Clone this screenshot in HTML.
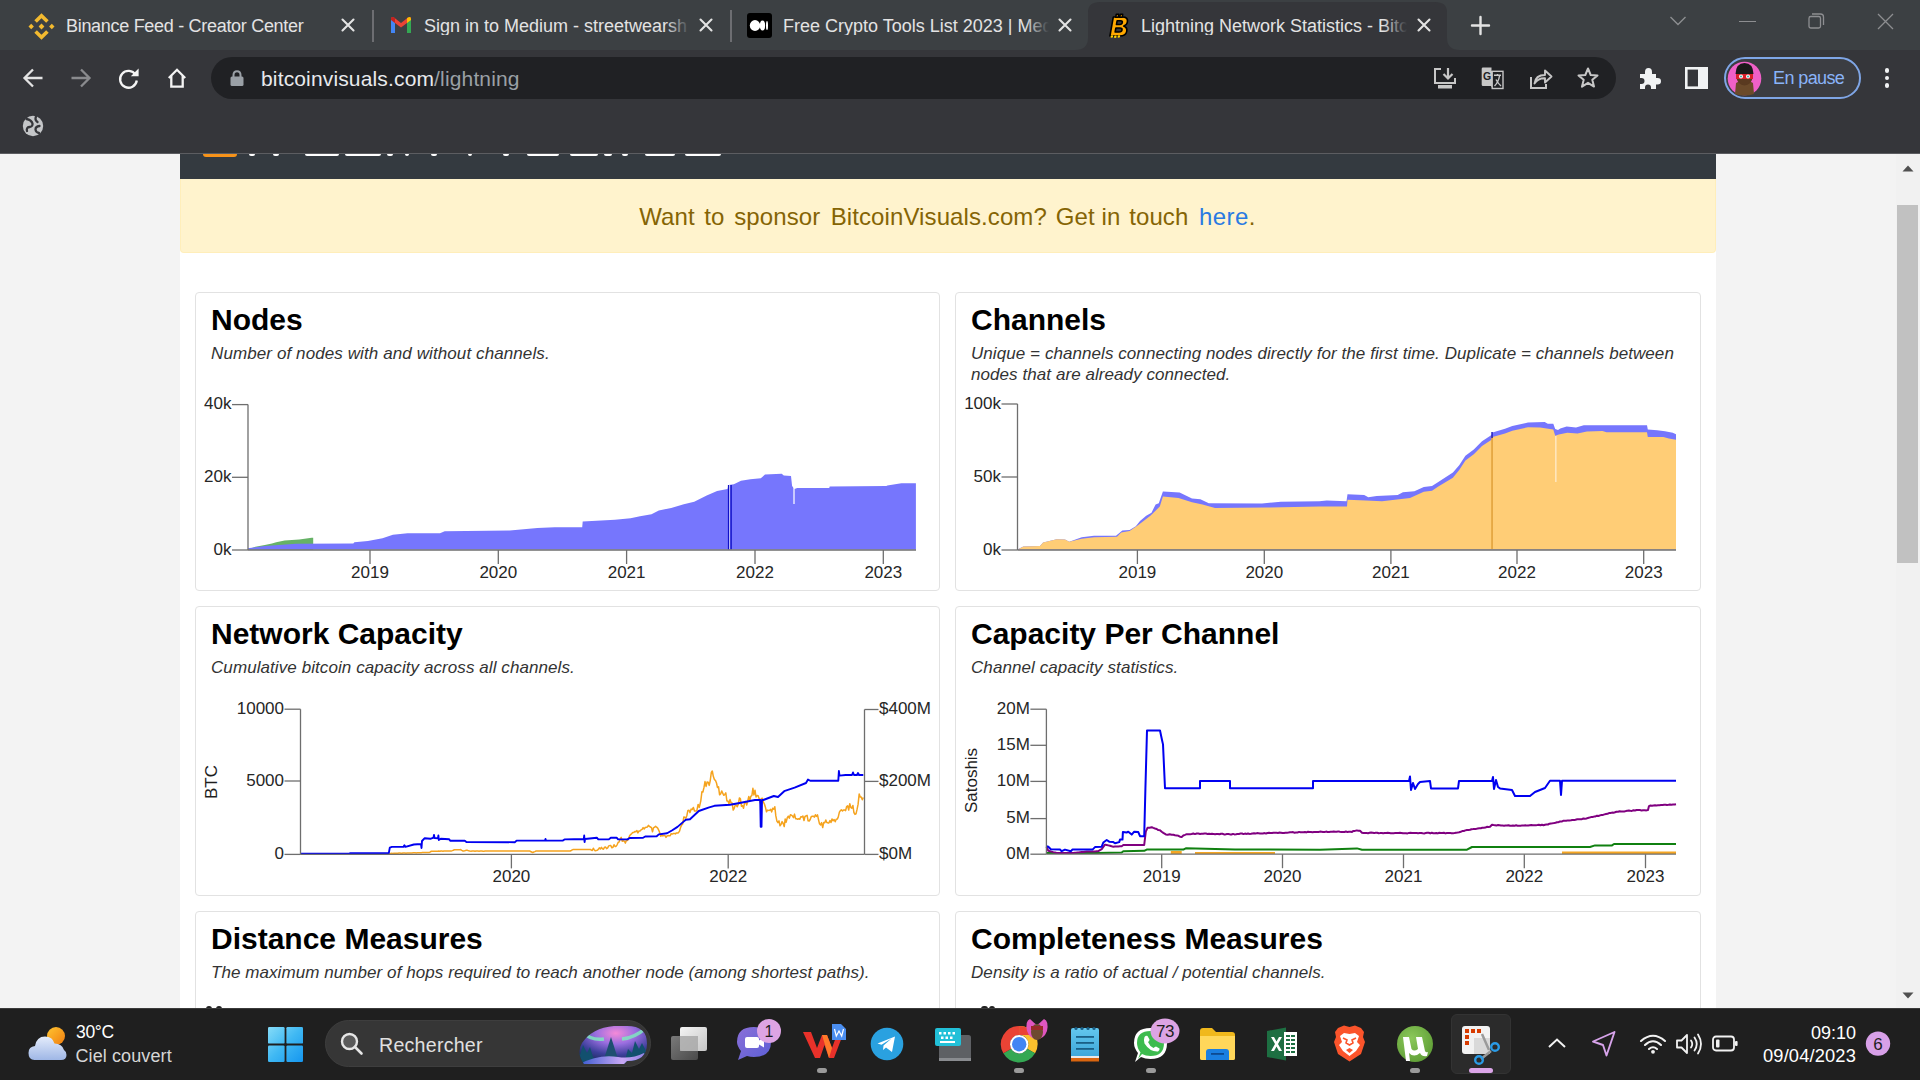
<!DOCTYPE html><html><head><meta charset="utf-8"><title>Lightning Network Statistics</title><style>
*{margin:0;padding:0;box-sizing:border-box}
html,body{width:1920px;height:1080px;overflow:hidden;background:#f3f3f3;font-family:"Liberation Sans", sans-serif}
.a{position:absolute}
.t{position:absolute;white-space:nowrap;line-height:1}
svg{position:absolute;overflow:visible}
</style></head><body>
<div class="a" style="left:0;top:0;width:1920px;height:50px;background:#3c4043"></div>
<svg class="a" style="left:1075px;top:0px;" width="385" height="50" viewBox="0 0 385 50"><path d="M0,50 Q13,50 13,38 L13,12 Q13,2 25,2 L360,2 Q372,2 372,12 L372,38 Q372,50 385,50 Z" fill="#35363a"/></svg>
<div class="a" style="left:0;top:50px;width:1920px;height:103px;background:#35363a"></div>
<div class="a" style="left:0;top:153px;width:1920px;height:1px;background:#5c5d61"></div>
<div class="a" style="left:372px;top:10px;width:1.5px;height:32px;background:#6d6e72"></div>
<div class="a" style="left:730px;top:10px;width:1.5px;height:32px;background:#6d6e72"></div>
<svg class="a" style="left:28px;top:13px;" width="27" height="27" viewBox="0 0 27 27"><g fill="none" stroke="#f3ba2f" stroke-width="3.6" stroke-linejoin="miter"><path d="M7.6,8.6 L13.5,2.7 L19.4,8.6"/><path d="M7.6,18.4 L13.5,24.3 L19.4,18.4"/></g><g fill="#f3ba2f"><path d="M13.5,10.6 L16.4,13.5 L13.5,16.4 L10.6,13.5 Z"/><path d="M3.2,10.8 L5.9,13.5 L3.2,16.2 L0.5,13.5 Z"/><path d="M23.8,10.8 L26.5,13.5 L23.8,16.2 L21.1,13.5 Z"/></g></svg>
<div class="t" style="left:66px;top:16.76px;font-size:18px;color:#e3e3e3;font-weight:400;font-style:normal;letter-spacing:-0.3px">Binance Feed - Creator Center</div>
<svg class="a" style="left:341px;top:18px;" width="14" height="14" viewBox="0 0 14 14"><path d="M1.5,1.5 L12.5,12.5 M12.5,1.5 L1.5,12.5" stroke="#e3e3e3" stroke-width="2.1" stroke-linecap="round"/></svg>
<svg class="a" style="left:389px;top:15px;" width="24" height="20" viewBox="0 0 24 20"><path d="M2,4 L2,18 L6,18 L6,8 L12,12.5 L18,8 L18,18 L22,18 L22,4 Q22,1 19,2.5 L12,8 L5,2.5 Q2,1 2,4 Z" fill="#ea4335"/><path d="M2,4 L2,18 L6,18 L6,8 Z" fill="#4285f4"/><path d="M22,4 L22,18 L18,18 L18,8 Z" fill="#34a853"/><path d="M18,8 L22,5 L22,4 Q22,1 19,2.5 L18,3.3 Z" fill="#fbbc04"/><path d="M2,4 Q2,1 5,2.5 L6,3.3 L6,8 L2,5 Z" fill="#c5221f"/></svg>
<div class="t" style="left:424px;top:16.76px;width:266px;overflow:hidden;font-size:18px;color:#e3e3e3;letter-spacing:0px">Sign in to Medium - streetwearsh</div>
<div class="a" style="left:666px;top:12px;width:24px;height:28px;background:linear-gradient(90deg,rgba(0,0,0,0),#3c4043)"></div>
<svg class="a" style="left:699px;top:18px;" width="14" height="14" viewBox="0 0 14 14"><path d="M1.5,1.5 L12.5,12.5 M12.5,1.5 L1.5,12.5" stroke="#e3e3e3" stroke-width="2.1" stroke-linecap="round"/></svg>
<svg class="a" style="left:747px;top:13px;" width="25" height="25" viewBox="0 0 25 25"><rect x="0" y="0" width="25" height="25" rx="3" fill="#000"/><ellipse cx="8" cy="12.5" rx="5.2" ry="5.4" fill="#fff"/><ellipse cx="15.5" cy="12.5" rx="2.6" ry="5" fill="#fff"/><ellipse cx="20" cy="12.5" rx="1" ry="4.6" fill="#fff"/></svg>
<div class="t" style="left:783px;top:16.76px;width:266px;overflow:hidden;font-size:18px;color:#e3e3e3;letter-spacing:0px">Free Crypto Tools List 2023 | Med</div>
<div class="a" style="left:1025px;top:12px;width:24px;height:28px;background:linear-gradient(90deg,rgba(0,0,0,0),#3c4043)"></div>
<svg class="a" style="left:1058px;top:18px;" width="14" height="14" viewBox="0 0 14 14"><path d="M1.5,1.5 L12.5,12.5 M12.5,1.5 L1.5,12.5" stroke="#e3e3e3" stroke-width="2.1" stroke-linecap="round"/></svg>
<svg class="a" style="left:1107px;top:13px;" width="24" height="26" viewBox="0 0 24 26"><g transform="translate(2,0) skewX(-10)"><g fill="#ffa800" stroke="#000" stroke-width="1.6" stroke-linejoin="round"><path d="M5,4 L14,4 Q20,4 20,9 Q20,12 17,13 Q21,14.3 21,18.3 Q21,23 14.5,23 L5,23 Z M9.5,7.8 L9.5,11.5 L13,11.5 Q15,11.5 15,9.6 Q15,7.8 13,7.8 Z M9.5,15 L9.5,19 L13.5,19 Q16,19 16,17 Q16,15 13.5,15 Z"/><rect x="7.5" y="1.2" width="2.4" height="3"/><rect x="11.5" y="1.2" width="2.4" height="3"/></g><g fill="#ffd000"><circle cx="7" cy="23.5" r="1.3"/><circle cx="10.5" cy="23.8" r="1.3"/><circle cx="14" cy="23.5" r="1.3"/></g></g></svg>
<div class="t" style="left:1141px;top:16.76px;width:266px;overflow:hidden;font-size:18px;color:#e3e3e3;letter-spacing:0px">Lightning Network Statistics - Bitc</div>
<div class="a" style="left:1383px;top:12px;width:24px;height:28px;background:linear-gradient(90deg,rgba(0,0,0,0),#35363a)"></div>
<svg class="a" style="left:1417px;top:18px;" width="14" height="14" viewBox="0 0 14 14"><path d="M1.5,1.5 L12.5,12.5 M12.5,1.5 L1.5,12.5" stroke="#e3e3e3" stroke-width="2.1" stroke-linecap="round"/></svg>
<svg class="a" style="left:1470px;top:15px;" width="21" height="21" viewBox="0 0 21 21"><path d="M10.5,2 L10.5,19 M2,10.5 L19,10.5" stroke="#e3e3e3" stroke-width="2.4" stroke-linecap="round"/></svg>
<svg class="a" style="left:1669px;top:15px;" width="18" height="12" viewBox="0 0 18 12"><path d="M1.5,2 L9,9.5 L16.5,2" stroke="#8d8e91" stroke-width="1.4" fill="none"/></svg>
<div class="a" style="left:1739px;top:21px;width:17px;height:1.4px;background:#8d8e91"></div>
<svg class="a" style="left:1808px;top:13px;" width="17" height="17" viewBox="0 0 17 17"><rect x="1" y="3.5" width="11.5" height="11.5" rx="1.8" stroke="#8d8e91" stroke-width="1.3" fill="none"/><path d="M4,1 L12.5,1 Q15.5,1 15.5,4 L15.5,12" stroke="#8d8e91" stroke-width="1.3" fill="none"/></svg>
<svg class="a" style="left:1877px;top:13px;" width="17" height="17" viewBox="0 0 17 17"><path d="M1,1 L16,16 M16,1 L1,16" stroke="#8d8e91" stroke-width="1.3"/></svg>
<svg class="a" style="left:22px;top:67px;" width="22" height="22" viewBox="0 0 22 22"><path d="M20.5,11 L3,11 M11,2.5 L2.5,11 L11,19.5" stroke="#e3e3e3" stroke-width="2.3" fill="none"/></svg>
<svg class="a" style="left:70px;top:67px;" width="22" height="22" viewBox="0 0 22 22"><path d="M1.5,11 L19,11 M11,2.5 L19.5,11 L11,19.5" stroke="#8a8b8e" stroke-width="2.3" fill="none"/></svg>
<svg class="a" style="left:118px;top:67px;" width="23" height="23" viewBox="0 0 23 23"><path d="M17.6,7.8 A8.4,8.4 0 1 0 18.8,13.5" stroke="#f4f4f4" stroke-width="2.3" fill="none"/><path d="M12.8,9.2 L20.6,9.2 L20.6,1.4 Z" fill="#f4f4f4"/></svg>
<svg class="a" style="left:166px;top:67px;" width="23" height="23" viewBox="0 0 23 23"><path d="M2.8,11 L11,2.8 L19.2,11 M5.3,9 L5.3,19.6 L16.7,19.6 L16.7,9" stroke="#f4f4f4" stroke-width="2.3" fill="none" stroke-linejoin="miter"/></svg>
<div class="a" style="left:211px;top:57px;width:1405px;height:42px;border-radius:21px;background:#202124"></div>
<svg class="a" style="left:230px;top:70px;" width="14" height="17" viewBox="0 0 14 17"><path d="M3.5,7 L3.5,5 Q3.5,1.2 7,1.2 Q10.5,1.2 10.5,5 L10.5,7" stroke="#9aa0a6" stroke-width="2" fill="none"/><rect x="0.5" y="6.5" width="13" height="9.5" rx="1.5" fill="#9aa0a6"/></svg>
<div class="t" style="left:261px;top:68.22px;font-size:21px;color:#e8eaed;font-weight:400;font-style:normal;letter-spacing:0.15px">bitcoinvisuals.com<span style="color:#9aa0a6">/lightning</span></div>
<svg class="a" style="left:1433px;top:67px;" width="24" height="23" viewBox="0 0 24 23"><path d="M8,2 L2,2 L2,16 L22,16 L22,11" stroke="#c7c7c7" stroke-width="2" fill="none"/><path d="M15,1 L15,11 M10.5,7 L15,11.5 L19.5,7" stroke="#c7c7c7" stroke-width="2.2" fill="none"/><rect x="5" y="18" width="14" height="3.5" fill="#c7c7c7"/></svg>
<svg class="a" style="left:1481px;top:67px;" width="23" height="23" viewBox="0 0 23 23"><path d="M2,0.5 L10.5,0.5 L10.5,4 L11,4 L11,19.5 L14,19.5 L14,21.5 L11.5,21.5 L10,19 L2,19 Q0.7,19 0.7,17.7 L0.7,1.8 Q0.7,0.5 2,0.5 Z" fill="#c7c7c7"/><text x="6" y="13" font-size="10.5" font-weight="700" text-anchor="middle" fill="#202124" font-family="Liberation Sans">G</text><rect x="11.2" y="4.3" width="10.8" height="17.2" stroke="#c7c7c7" stroke-width="1.4" fill="#202124"/><path d="M13,8.2 L20,8.2 M16.5,7 L16.5,8.2 M13.5,19 Q17.5,15 18.5,9 M15,12.5 Q17,16.5 20,19" stroke="#c7c7c7" stroke-width="1.4" fill="none"/></svg>
<svg class="a" style="left:1529px;top:67px;" width="24" height="23" viewBox="0 0 24 23"><path d="M2,10 L2,21 L17,21 L17,17" stroke="#c7c7c7" stroke-width="2" fill="none"/><path d="M5.5,16.5 Q6.5,8 16,8 L16,3.5 L22.5,9.5 L16,15.5 L16,11.3 Q9,11 5.5,16.5 Z" stroke="#c7c7c7" stroke-width="1.9" fill="none" stroke-linejoin="round"/></svg>
<svg class="a" style="left:1576px;top:66px;" width="24" height="23" viewBox="0 0 24 23"><path d="M12,2.5 L14.7,9 L21.5,9.4 L16.3,13.8 L18,20.6 L12,16.8 L6,20.6 L7.7,13.8 L2.5,9.4 L9.3,9 Z" stroke="#c7c7c7" stroke-width="2" fill="none" stroke-linejoin="round"/></svg>
<svg class="a" style="left:1637px;top:66px;" width="25" height="24" viewBox="0 0 25 24"><path d="M3,8 L8,8 L8,6 Q8,2 11.5,2 Q15,2 15,6 L15,8 L19,8 L19,12 L20.5,12 Q24,12 24,15.3 Q24,18.6 20.5,18.6 L19,18.6 L19,23 L14,23 L14,21.5 Q14,18.5 11,18.5 Q8,18.5 8,21.5 L8,23 L3,23 L3,18 L4.5,18 Q7.5,18 7.5,15 Q7.5,12 4.5,12 L3,12 Z" fill="#f1f3f4"/></svg>
<svg class="a" style="left:1685px;top:67px;" width="23" height="22" viewBox="0 0 23 22"><rect x="1.3" y="1.3" width="20.4" height="19.4" fill="none" stroke="#f1f3f4" stroke-width="2.6"/><rect x="13" y="1" width="9" height="20" fill="#f1f3f4"/></svg>
<div class="a" style="left:1724px;top:57px;width:137px;height:42px;border-radius:21px;border:2px solid #7fa6e6;background:#3b3d42"></div>
<svg class="a" style="left:1727px;top:61px;" width="35" height="35" viewBox="0 0 35 35"><circle cx="17.5" cy="17.5" r="16.8" fill="#f060c8"/><path d="M8,33 L9,22 Q17.5,16 26,22 L27,33 Q17.5,36 8,33 Z" fill="#6b4a2a"/><ellipse cx="17.5" cy="16" rx="8" ry="8.5" fill="#5a3a20"/><path d="M8.5,13 Q9,2 17.5,2 Q26,2 26.5,13 Z" fill="#1a1a1a"/><rect x="9" y="13" width="17" height="5" fill="#d8202a"/><circle cx="14" cy="15.5" r="2" fill="#fff"/><circle cx="21" cy="15.5" r="2" fill="#fff"/><circle cx="14" cy="15.5" r="1" fill="#3aa"/><circle cx="21" cy="15.5" r="1" fill="#3aa"/></svg>
<div class="t" style="left:1773px;top:68.76px;font-size:18px;color:#8ab4f8;font-weight:400;font-style:normal;letter-spacing:-0.6px">En pause</div>
<div class="a" style="left:1884.6px;top:68.19999999999999px;width:4.8px;height:4.8px;border-radius:50%;background:#f1f3f4"></div>
<div class="a" style="left:1884.6px;top:75.69999999999999px;width:4.8px;height:4.8px;border-radius:50%;background:#f1f3f4"></div>
<div class="a" style="left:1884.6px;top:83.1px;width:4.8px;height:4.8px;border-radius:50%;background:#f1f3f4"></div>
<svg class="a" style="left:22px;top:115px;" width="22" height="22" viewBox="0 0 22 22"><circle cx="11" cy="11" r="10.2" fill="#c4c6c8"/><path d="M4.5,4 Q9.5,5 10.5,8.5 Q11,11.5 7.5,12 Q4,12.5 5,16 M14,1.5 Q12.5,5 15.5,7 M17.5,11 Q13.5,11.5 13.5,14.5 Q13.8,17.5 17,18" stroke="#35363a" stroke-width="2.3" fill="none" stroke-linecap="round"/></svg>
<div class="a" style="left:0;top:154px;width:1896px;height:854px;background:#f3f3f3"></div>
<div class="a" style="left:180px;top:154px;width:1536px;height:854px;background:#fff"></div>
<div class="a" style="left:180px;top:154px;width:1536px;height:25px;background:#343a40"></div>
<div class="a" style="left:203px;top:154px;width:34px;height:3px;background:#f7931a;border-radius:0 0 3px 3px"></div>
<div class="a" style="left:249px;top:154px;width:6px;height:2px;background:#fff;border-radius:0 0 2px 2px"></div>
<div class="a" style="left:273px;top:154px;width:6px;height:2px;background:#fff;border-radius:0 0 2px 2px"></div>
<div class="a" style="left:305px;top:154px;width:34px;height:2px;background:#fff;border-radius:0 0 2px 2px"></div>
<div class="a" style="left:345px;top:154px;width:36px;height:2px;background:#fff;border-radius:0 0 2px 2px"></div>
<div class="a" style="left:387px;top:154px;width:6px;height:2px;background:#fff;border-radius:0 0 2px 2px"></div>
<div class="a" style="left:405px;top:154px;width:4px;height:2px;background:#fff;border-radius:0 0 2px 2px"></div>
<div class="a" style="left:431px;top:154px;width:6px;height:2px;background:#fff;border-radius:0 0 2px 2px"></div>
<div class="a" style="left:468px;top:154px;width:4px;height:2px;background:#fff;border-radius:0 0 2px 2px"></div>
<div class="a" style="left:503px;top:154px;width:6px;height:2px;background:#fff;border-radius:0 0 2px 2px"></div>
<div class="a" style="left:527px;top:154px;width:32px;height:2px;background:#fff;border-radius:0 0 2px 2px"></div>
<div class="a" style="left:570px;top:154px;width:28px;height:2px;background:#fff;border-radius:0 0 2px 2px"></div>
<div class="a" style="left:604px;top:154px;width:8px;height:2px;background:#fff;border-radius:0 0 2px 2px"></div>
<div class="a" style="left:622px;top:154px;width:6px;height:2px;background:#fff;border-radius:0 0 2px 2px"></div>
<div class="a" style="left:645px;top:154px;width:30px;height:2px;background:#fff;border-radius:0 0 2px 2px"></div>
<div class="a" style="left:685px;top:154px;width:36px;height:2px;background:#fff;border-radius:0 0 2px 2px"></div>
<div class="a" style="left:180px;top:179px;width:1536px;height:74px;background:#fff3cd;border:1px solid #ffeeba;border-top:none;border-radius:0 0 4px 4px"></div>
<div class="t" style="left:639.2px;top:204.68px;font-size:24px;color:#856404;font-weight:400;font-style:normal;letter-spacing:0.1px">Want</div>
<div class="t" style="left:704.2px;top:204.68px;font-size:24px;color:#856404;font-weight:400;font-style:normal;letter-spacing:0.1px">to</div>
<div class="t" style="left:734.2px;top:204.68px;font-size:24px;color:#856404;font-weight:400;font-style:normal;letter-spacing:0.1px">sponsor</div>
<div class="t" style="left:830.7px;top:204.68px;font-size:24px;color:#856404;font-weight:400;font-style:normal;letter-spacing:0.1px">BitcoinVisuals.com?</div>
<div class="t" style="left:1055.7px;top:204.68px;font-size:24px;color:#856404;font-weight:400;font-style:normal;letter-spacing:0.1px">Get</div>
<div class="t" style="left:1101.5px;top:204.68px;font-size:24px;color:#856404;font-weight:400;font-style:normal;letter-spacing:0.1px">in</div>
<div class="t" style="left:1129.2px;top:204.68px;font-size:24px;color:#856404;font-weight:400;font-style:normal;letter-spacing:0.1px">touch</div>
<div class="t" style="left:1199px;top:204.68px;font-size:24px;color:#856404;font-weight:400;font-style:normal;letter-spacing:0.4px"><span style="color:#2a7ae2">here</span>.</div>
<div class="a" style="left:195px;top:292px;width:745px;height:299px;border:1px solid #e2e2e2;border-radius:4px;background:#fff"></div>
<div class="a" style="left:955px;top:292px;width:746px;height:299px;border:1px solid #e2e2e2;border-radius:4px;background:#fff"></div>
<div class="a" style="left:195px;top:606px;width:745px;height:290px;border:1px solid #e2e2e2;border-radius:4px;background:#fff"></div>
<div class="a" style="left:955px;top:606px;width:746px;height:290px;border:1px solid #e2e2e2;border-radius:4px;background:#fff"></div>
<div class="a" style="left:195px;top:911px;width:745px;height:200px;border:1px solid #e2e2e2;border-radius:4px;background:#fff"></div>
<div class="a" style="left:955px;top:911px;width:746px;height:200px;border:1px solid #e2e2e2;border-radius:4px;background:#fff"></div>
<div class="t" style="left:211px;top:304.61px;font-size:30px;color:#000;font-weight:700;font-style:normal;">Nodes</div>
<div class="t" style="left:211px;top:344.61px;font-size:17px;color:#333;font-weight:400;font-style:italic;letter-spacing:0.1px">Number of nodes with and without channels.</div>
<div class="t" style="left:971px;top:304.61px;font-size:30px;color:#000;font-weight:700;font-style:normal;">Channels</div>
<div class="t" style="left:971px;top:344.61px;font-size:17px;color:#333;font-weight:400;font-style:italic;letter-spacing:0.07px">Unique = channels connecting nodes directly for the first time. Duplicate = channels between</div>
<div class="t" style="left:971px;top:365.61px;font-size:17px;color:#333;font-weight:400;font-style:italic;letter-spacing:0.07px">nodes that are already connected.</div>
<div class="t" style="left:211px;top:618.61px;font-size:30px;color:#000;font-weight:700;font-style:normal;">Network Capacity</div>
<div class="t" style="left:211px;top:658.61px;font-size:17px;color:#333;font-weight:400;font-style:italic;letter-spacing:0.08px">Cumulative bitcoin capacity across all channels.</div>
<div class="t" style="left:971px;top:618.61px;font-size:30px;color:#000;font-weight:700;font-style:normal;">Capacity Per Channel</div>
<div class="t" style="left:971px;top:658.61px;font-size:17px;color:#333;font-weight:400;font-style:italic;letter-spacing:0.08px">Channel capacity statistics.</div>
<div class="t" style="left:211px;top:923.61px;font-size:30px;color:#000;font-weight:700;font-style:normal;">Distance Measures</div>
<div class="t" style="left:211px;top:963.61px;font-size:17px;color:#333;font-weight:400;font-style:italic;letter-spacing:0.07px">The maximum number of hops required to reach another node (among shortest paths).</div>
<div class="t" style="left:971px;top:923.61px;font-size:30px;color:#000;font-weight:700;font-style:normal;">Completeness Measures</div>
<div class="t" style="left:971px;top:963.61px;font-size:17px;color:#333;font-weight:400;font-style:italic;letter-spacing:0.08px">Density is a ratio of actual / potential channels.</div>
<div class="a" style="left:1896px;top:154px;width:24px;height:854px;background:#f1f1f1"></div>
<div class="a" style="left:1897px;top:205px;width:21px;height:358px;background:#c1c1c1"></div>
<svg class="a" style="left:1901px;top:164px;" width="14" height="8" viewBox="0 0 14 8"><path d="M1.5,7.5 L7,1.5 L12.5,7.5 Z" fill="#505050"/></svg>
<svg class="a" style="left:1901px;top:992px;" width="14" height="8" viewBox="0 0 14 8"><path d="M1.5,0.5 L7,6.5 L12.5,0.5 Z" fill="#505050"/></svg>
<svg class="a" style="left:0px;top:0px;pointer-events:none" width="1920" height="1080" viewBox="0 0 1920 1080"><polygon points="247.9,549.5 255.4,546.7 264.8,545.1 272.0,543.5 276.2,542.2 284.6,540.6 299.2,539.4 311.7,537.8 313.2,537.8 313.2,549.5" fill="#66b266"/><polygon points="247.9,549.5 247.9,548.2 255.4,547.2 264.8,546.1 272.0,545.6 296.0,543.8 353.3,543.5 354.4,542.3 367.9,540.9 382.5,538.3 392.9,534.7 407.5,533.3 440.0,533.3 444.7,531.2 509.8,530.4 537.4,528.1 554.6,527.3 582.2,527.3 582.7,521.4 615.0,519.8 630.6,518.2 640.0,516.2 651.5,514.2 658.8,510.5 671.2,507.9 683.8,504.3 694.2,501.7 706.7,495.4 717.1,491.0 727.5,489.0 728.5,485.0 733.8,484.2 741.0,480.8 750.4,479.3 760.8,478.2 765.0,474.6 781.7,473.8 783.8,475.6 791.0,476.1 792.1,486.0 794.5,489.0 797.2,488.1 829.2,488.1 829.7,486.4 886.4,486.0 887.3,485.5 901.4,483.3 915.9,483.3 915.9,549.5" fill="#7676fd"/><rect x="727.9" y="485" width="1.5" height="64.5" fill="#1010c8"/><rect x="729.4" y="485" width="0.9" height="64.5" fill="#ffffff"/><rect x="730.3" y="485" width="1.5" height="64.5" fill="#1010c8"/><rect x="793.4" y="487" width="1.2" height="17" fill="#ffffff"/><line x1="248" y1="404.6" x2="248" y2="550" stroke="#6e6e6e" stroke-width="1.3"/><line x1="232" y1="404.6" x2="248" y2="404.6" stroke="#6e6e6e" stroke-width="1.3"/><text x="231.5" y="409.1" text-anchor="end" font-size="17" fill="#262626" font-family="Liberation Sans">40k</text><line x1="232" y1="477.3" x2="248" y2="477.3" stroke="#6e6e6e" stroke-width="1.3"/><text x="231.5" y="481.8" text-anchor="end" font-size="17" fill="#262626" font-family="Liberation Sans">20k</text><line x1="232" y1="550" x2="248" y2="550" stroke="#6e6e6e" stroke-width="1.3"/><text x="231.5" y="554.5" text-anchor="end" font-size="17" fill="#262626" font-family="Liberation Sans">0k</text><line x1="248" y1="550" x2="916" y2="550" stroke="#6e6e6e" stroke-width="1.3"/><line x1="370" y1="550" x2="370" y2="564" stroke="#6e6e6e" stroke-width="1.3"/><text x="370" y="577.8" text-anchor="middle" font-size="17" fill="#262626" font-family="Liberation Sans">2019</text><line x1="498.3" y1="550" x2="498.3" y2="564" stroke="#6e6e6e" stroke-width="1.3"/><text x="498.3" y="577.8" text-anchor="middle" font-size="17" fill="#262626" font-family="Liberation Sans">2020</text><line x1="626.6" y1="550" x2="626.6" y2="564" stroke="#6e6e6e" stroke-width="1.3"/><text x="626.6" y="577.8" text-anchor="middle" font-size="17" fill="#262626" font-family="Liberation Sans">2021</text><line x1="755" y1="550" x2="755" y2="564" stroke="#6e6e6e" stroke-width="1.3"/><text x="755" y="577.8" text-anchor="middle" font-size="17" fill="#262626" font-family="Liberation Sans">2022</text><line x1="883.3" y1="550" x2="883.3" y2="564" stroke="#6e6e6e" stroke-width="1.3"/><text x="883.3" y="577.8" text-anchor="middle" font-size="17" fill="#262626" font-family="Liberation Sans">2023</text></svg>
<svg class="a" style="left:0px;top:0px;pointer-events:none" width="1920" height="1080" viewBox="0 0 1920 1080"><polygon points="1017.3,549.5 1017.3,549.5 1023.3,546.6 1040.0,546.0 1043.1,542.4 1056.7,539.3 1065.0,539.6 1069.2,541.7 1081.7,537.2 1094.0,535.8 1116.0,535.8 1122.3,530.4 1129.6,529.9 1135.8,526.2 1140.0,521.0 1146.2,515.8 1151.5,512.7 1155.6,504.4 1158.8,503.3 1162.9,491.4 1179.6,492.4 1192.0,498.6 1200.4,499.2 1208.8,503.3 1262.0,503.5 1280.8,501.8 1319.4,501.2 1326.7,500.4 1346.5,501.2 1347.5,494.2 1364.2,495.0 1368.3,497.3 1376.7,496.0 1397.7,494.9 1402.9,492.3 1414.4,491.2 1423.8,487.0 1432.0,486.0 1438.3,481.9 1452.9,472.5 1459.2,465.2 1465.4,455.8 1473.8,449.6 1482.0,441.2 1491.5,435.0 1492.5,432.4 1505.0,428.8 1512.3,426.1 1528.0,422.5 1544.7,422.1 1547.8,423.7 1553.3,423.7 1555.2,429.1 1558.0,430.0 1560.3,428.4 1566.6,426.4 1576.0,427.6 1583.8,425.2 1647.0,425.2 1647.8,429.4 1657.2,430.2 1665.0,431.2 1672.8,432.7 1676.0,434.2 1676.0,549.5" fill="#7676fd"/><polygon points="1017.3,549.5 1017.3,549.7 1023.3,546.6 1040.0,546.0 1043.1,542.4 1056.7,539.3 1065.0,539.6 1069.2,541.7 1081.7,538.8 1094.2,537.2 1117.0,536.7 1121.2,532.5 1129.6,530.9 1138.0,525.2 1150.4,515.8 1159.8,506.5 1162.9,496.6 1178.5,498.1 1192.0,502.3 1202.5,504.4 1215.0,508.0 1266.0,507.5 1319.4,506.5 1347.0,506.5 1347.5,499.7 1366.0,500.4 1382.0,501.2 1410.0,498.1 1414.4,496.0 1423.8,491.7 1432.0,490.7 1438.3,486.6 1452.9,477.7 1459.2,470.0 1465.4,460.5 1473.8,454.3 1482.0,446.0 1491.5,439.7 1492.5,437.0 1505.0,433.4 1512.3,430.8 1528.0,427.2 1540.0,427.6 1553.3,429.5 1555.2,435.8 1558.8,434.6 1567.3,432.7 1577.5,433.4 1586.9,431.5 1602.5,431.1 1606.4,432.3 1647.0,432.3 1647.8,437.0 1663.4,437.0 1668.9,438.5 1676.0,439.7 1676.0,549.5" fill="#ffcd76"/><rect x="1491.3" y="436" width="1.5" height="113" fill="#e0a038"/><rect x="1491.3" y="432" width="1.5" height="6" fill="#2020c0"/><rect x="1555" y="436" width="1.6" height="46" fill="#ffe6bb"/><line x1="1017.5" y1="404" x2="1017.5" y2="550" stroke="#6e6e6e" stroke-width="1.3"/><line x1="1001.5" y1="404" x2="1017.5" y2="404" stroke="#6e6e6e" stroke-width="1.3"/><text x="1001.0" y="408.5" text-anchor="end" font-size="17" fill="#262626" font-family="Liberation Sans">100k</text><line x1="1001.5" y1="477" x2="1017.5" y2="477" stroke="#6e6e6e" stroke-width="1.3"/><text x="1001.0" y="481.5" text-anchor="end" font-size="17" fill="#262626" font-family="Liberation Sans">50k</text><line x1="1001.5" y1="550" x2="1017.5" y2="550" stroke="#6e6e6e" stroke-width="1.3"/><text x="1001.0" y="554.5" text-anchor="end" font-size="17" fill="#262626" font-family="Liberation Sans">0k</text><line x1="1017.5" y1="550" x2="1676" y2="550" stroke="#6e6e6e" stroke-width="1.3"/><line x1="1137.4" y1="550" x2="1137.4" y2="564" stroke="#6e6e6e" stroke-width="1.3"/><text x="1137.4" y="577.8" text-anchor="middle" font-size="17" fill="#262626" font-family="Liberation Sans">2019</text><line x1="1264.3" y1="550" x2="1264.3" y2="564" stroke="#6e6e6e" stroke-width="1.3"/><text x="1264.3" y="577.8" text-anchor="middle" font-size="17" fill="#262626" font-family="Liberation Sans">2020</text><line x1="1390.9" y1="550" x2="1390.9" y2="564" stroke="#6e6e6e" stroke-width="1.3"/><text x="1390.9" y="577.8" text-anchor="middle" font-size="17" fill="#262626" font-family="Liberation Sans">2021</text><line x1="1517" y1="550" x2="1517" y2="564" stroke="#6e6e6e" stroke-width="1.3"/><text x="1517" y="577.8" text-anchor="middle" font-size="17" fill="#262626" font-family="Liberation Sans">2022</text><line x1="1643.7" y1="550" x2="1643.7" y2="564" stroke="#6e6e6e" stroke-width="1.3"/><text x="1643.7" y="577.8" text-anchor="middle" font-size="17" fill="#262626" font-family="Liberation Sans">2023</text></svg>
<svg class="a" style="left:0px;top:0px;pointer-events:none" width="1920" height="1080" viewBox="0 0 1920 1080"><polyline points="388.8,853.5 389.8,853.4 390.8,853.5 391.8,853.3 392.8,853.4 393.8,853.3 394.8,853.2 395.9,853.3 396.9,853.2 397.9,853.3 398.9,853.1 399.9,853.1 400.9,853.2 402.0,853.3 403.0,853.1 404.0,853.1 405.0,853.1 406.0,853.2 407.0,853.1 408.1,853.0 409.1,853.1 410.1,852.9 411.1,853.0 412.1,852.9 413.1,852.8 414.2,852.8 415.2,852.8 416.2,852.9 417.2,852.7 418.2,852.8 419.2,852.8 420.3,852.7 421.3,852.7 422.3,852.6 423.3,852.5 424.3,852.6 425.3,852.6 426.4,852.6 427.4,852.5 428.4,852.5 429.4,852.5 430.4,851.8 431.5,851.3 432.5,851.3 433.6,851.2 434.6,851.2 435.7,851.2 436.7,851.3 437.7,851.2 438.8,851.1 439.8,851.3 440.9,851.0 441.9,851.1 442.9,851.2 444.0,851.0 445.0,851.1 446.1,851.0 447.1,851.1 448.1,851.1 449.2,851.0 450.2,851.1 451.2,851.0 452.3,850.6 453.3,850.2 454.4,849.7 455.4,849.7 456.5,849.8 457.5,849.8 458.5,849.7 459.6,849.7 460.6,849.6 461.8,850.4 463.0,851.0 464.3,850.9 465.6,850.5 466.9,850.1 467.9,850.5 469.0,850.9 470.0,851.1 471.0,851.2 472.0,851.1 473.0,851.1 474.0,851.1 475.0,851.3 476.0,851.1 477.0,851.1 478.0,851.1 479.0,851.2 480.0,851.0 481.0,851.1 482.0,851.1 483.0,851.2 484.0,851.2 485.0,851.1 486.0,851.0 487.0,851.0 488.0,851.0 489.0,851.1 490.0,851.1 491.0,850.9 492.0,850.9 493.0,850.9 494.1,850.9 495.1,851.0 496.1,851.0 497.1,850.9 498.1,850.9 499.1,851.0 500.2,851.0 501.2,851.0 502.2,851.1 503.2,851.0 504.2,851.0 505.2,851.0 506.2,851.0 507.3,850.9 508.3,851.1 509.3,851.1 510.3,851.1 511.3,851.1 512.3,851.0 513.4,851.0 514.4,850.9 515.4,851.0 516.4,850.9 517.4,850.9 518.4,850.9 519.4,850.9 520.5,851.0 521.5,850.9 522.5,850.9 523.5,850.9 524.5,850.9 525.5,851.0 526.6,850.9 527.6,851.1 528.6,851.0 529.6,850.9 530.6,851.5 531.7,852.0 532.7,852.6 533.7,852.0 534.8,851.6 535.8,851.1 536.8,851.0 537.8,851.0 538.8,850.9 539.8,850.9 540.9,851.0 541.9,850.9 542.9,851.1 543.9,850.9 544.9,850.9 545.9,851.1 546.9,851.0 547.9,850.9 549.0,851.0 550.0,850.9 551.0,851.0 552.0,851.1 553.0,851.1 554.0,851.0 555.0,850.9 556.0,851.0 557.0,850.9 558.1,851.1 559.1,851.0 560.1,851.1 561.1,851.0 562.1,850.9 563.1,851.1 564.1,851.1 565.1,851.1 566.2,851.1 567.2,851.1 568.2,851.1 569.2,850.9 570.2,851.0 571.2,850.5 572.3,849.9 573.3,849.4 574.3,849.4 575.3,849.4 576.3,849.5 577.3,849.6 578.3,849.5 579.3,849.6 580.3,849.6 581.3,849.6 582.3,849.5 583.3,849.4 584.3,849.4 585.3,849.4 586.3,849.4 587.3,849.5 588.3,849.6 589.3,849.6 590.3,849.4 591.3,850.0 592.3,850.5 593.3,848.2 594.3,850.0 595.3,850.8 596.3,850.4 597.3,850.3 598.3,849.4 599.3,847.8 600.4,849.0 601.4,847.4 602.5,848.8 603.5,849.2 604.6,847.2 605.6,847.1 606.6,848.7 607.7,847.8 608.7,845.9 609.8,845.6 610.8,845.6 611.9,847.8 612.9,847.4 614.0,844.7 615.0,846.4 616.0,846.4 617.1,844.8 618.1,842.5 619.2,841.8 620.2,839.1 621.2,837.4 622.3,841.2 623.3,840.8 624.4,841.1 625.4,843.1 626.4,840.2 627.5,840.4 628.5,839.0 629.6,835.7 630.6,834.6 631.6,833.7 632.7,832.5 633.8,832.6 634.8,831.4 635.8,831.7 636.9,830.6 637.9,832.9 639.0,831.0 640.0,831.1 641.0,829.9 642.1,829.4 643.1,827.6 644.2,829.0 645.2,827.5 646.3,827.3 647.3,827.1 648.4,825.3 649.4,826.4 650.4,827.0 651.5,827.7 652.5,831.7 653.5,827.9 654.6,827.1 655.6,826.2 656.6,827.2 657.7,828.1 658.8,830.3 659.8,833.0 660.8,836.3 661.8,834.4 662.9,836.0 663.9,835.3 665.0,835.6 666.0,837.4 667.0,836.0 668.1,835.6 669.1,835.7 670.2,835.7 671.2,833.7 672.3,834.1 673.3,833.6 674.4,833.4 675.4,833.9 676.4,832.9 677.5,833.1 678.5,832.7 679.5,831.2 680.6,827.4 681.7,825.0 682.7,824.0 683.8,817.1 684.8,817.3 685.9,818.1 686.9,815.4 687.9,810.4 689.0,810.3 690.0,812.6 691.1,809.1 692.2,809.5 693.4,807.5 694.5,811.0 695.6,811.0 696.8,810.8 698.1,804.4 699.3,807.4 700.8,800.8 701.9,791.8 702.9,792.0 704.0,787.4 705.0,781.6 706.1,786.4 707.1,782.0 708.2,782.2 709.2,785.4 710.2,780.8 711.3,772.5 712.3,771.0 713.3,776.3 714.4,779.6 715.4,780.3 716.5,783.0 717.5,787.6 718.5,786.7 719.6,794.8 720.6,794.0 721.7,790.9 722.7,793.2 723.8,795.3 724.8,794.5 725.8,792.8 726.9,801.0 728.0,801.1 729.0,804.0 730.0,799.6 731.1,802.7 732.1,802.9 733.2,810.1 734.2,808.3 735.2,805.3 736.3,805.3 737.3,806.7 738.4,804.0 739.4,797.9 740.4,798.9 741.5,806.3 742.5,805.6 743.5,808.3 744.6,802.9 745.6,801.6 746.7,805.1 747.7,801.1 748.8,796.5 749.8,800.7 750.8,796.4 751.9,795.5 752.9,788.3 753.9,794.9 755.0,790.2 756.0,797.0 757.0,795.4 758.1,795.8 759.2,798.7 760.2,802.7 761.2,798.6 762.3,798.3 763.3,801.9 764.4,804.0 765.4,807.2 766.5,811.8 767.5,810.1 768.6,810.4 769.6,810.3 770.7,809.4 771.7,811.9 772.7,808.2 773.8,809.3 774.8,806.7 775.8,815.7 776.9,821.1 777.9,822.6 779.0,820.8 780.0,825.8 781.1,824.3 782.1,821.6 783.2,823.5 784.2,826.6 785.2,818.9 786.2,822.2 787.3,817.6 788.3,816.2 789.3,818.2 790.4,814.7 791.4,815.1 792.5,816.0 793.5,817.7 794.5,814.1 795.6,818.7 796.6,818.8 797.7,819.3 798.8,818.7 799.8,819.3 800.8,816.8 801.9,816.9 802.9,816.0 804.0,820.5 805.0,816.5 806.0,815.9 807.1,815.3 808.1,820.8 809.2,821.0 810.2,819.5 811.2,816.7 812.3,816.2 813.3,816.2 814.4,817.1 815.4,814.7 816.4,816.4 817.5,814.8 818.5,819.6 819.5,823.8 820.6,824.9 821.6,822.6 822.7,827.5 823.7,822.6 824.8,822.7 825.8,820.0 826.8,822.5 827.9,822.9 828.9,822.9 830.0,820.6 831.0,822.5 832.0,818.9 833.1,820.8 834.1,819.5 835.2,821.8 836.2,819.2 837.3,819.1 838.3,816.9 839.4,812.2 840.4,810.6 841.4,809.8 842.5,811.0 843.5,809.9 844.6,809.9 845.6,810.6 846.6,806.7 847.7,805.8 848.7,810.1 849.8,803.7 850.8,807.4 851.8,808.3 852.9,805.4 853.9,812.5 855.0,814.4 856.0,813.9 857.1,809.2 858.1,804.2 859.2,793.9 860.2,796.9 861.2,797.0 862.3,799.7 863.3,797.5" fill="none" stroke="#f5a31e" stroke-width="1.5" stroke-linejoin="round"/><polyline points="300.5,853.8 349.7,853.8 349.9,853.2 388.8,853.2 389.8,847.6 391.9,846.9 403.3,846.9 404.4,845.2 405.5,846.9 413.8,844.5 421.0,844.0 421.5,848.0 422.0,841.0 424.7,838.2 430.4,838.8 433.5,837.7 434.0,835.0 434.5,838.0 438.0,838.2 438.4,835.5 438.8,840.0 440.8,838.8 449.2,839.3 450.2,840.8 464.8,840.8 466.4,842.0 515.0,842.2 516.6,840.6 545.0,840.6 545.5,839.0 546.0,840.6 562.9,840.6 564.5,839.4 583.8,839.0 584.2,835.5 584.6,842.0 585.0,839.0 596.8,837.7 598.3,839.4 608.8,839.4 610.8,837.7 616.6,837.7 618.1,839.4 627.5,839.4 629.6,838.0 643.1,837.7 645.2,836.5 656.7,836.2 658.8,834.4 667.1,833.3 672.3,830.2 677.5,826.9 682.7,822.4 685.8,819.8 690.0,819.3 698.8,811.0 709.2,807.4 714.4,805.8 730.0,804.8 738.3,803.2 755.0,800.0 760.2,800.0 760.7,826.7 761.5,826.7 762.0,800.0 763.3,800.0 773.8,796.0 778.0,797.0 784.2,791.2 794.6,787.6 806.0,783.0 808.0,779.5 810.2,780.8 838.3,780.8 838.9,771.0 839.5,775.6 845.6,775.0 852.0,775.0 853.0,772.5 854.0,775.0 857.0,775.0 858.0,773.0 859.0,775.0 863.3,775.0" fill="none" stroke="#0000f0" stroke-width="1.9" stroke-linejoin="round"/><line x1="300.5" y1="709.2" x2="300.5" y2="854.4" stroke="#6e6e6e" stroke-width="1.3"/><line x1="284.5" y1="709.2" x2="300.5" y2="709.2" stroke="#6e6e6e" stroke-width="1.3"/><text x="284.0" y="713.7" text-anchor="end" font-size="17" fill="#262626" font-family="Liberation Sans">10000</text><line x1="284.5" y1="781" x2="300.5" y2="781" stroke="#6e6e6e" stroke-width="1.3"/><text x="284.0" y="785.5" text-anchor="end" font-size="17" fill="#262626" font-family="Liberation Sans">5000</text><line x1="284.5" y1="854.4" x2="300.5" y2="854.4" stroke="#6e6e6e" stroke-width="1.3"/><text x="284.0" y="858.9" text-anchor="end" font-size="17" fill="#262626" font-family="Liberation Sans">0</text><line x1="864.5" y1="709.5" x2="864.5" y2="854.4" stroke="#6e6e6e" stroke-width="1.3"/><line x1="864.5" y1="709.5" x2="878.5" y2="709.5" stroke="#6e6e6e" stroke-width="1.3"/><text x="879.0" y="714.0" font-size="17" fill="#262626" font-family="Liberation Sans">$400M</text><line x1="864.5" y1="781.4" x2="878.5" y2="781.4" stroke="#6e6e6e" stroke-width="1.3"/><text x="879.0" y="785.9" font-size="17" fill="#262626" font-family="Liberation Sans">$200M</text><line x1="864.5" y1="854.4" x2="878.5" y2="854.4" stroke="#6e6e6e" stroke-width="1.3"/><text x="879.0" y="858.9" font-size="17" fill="#262626" font-family="Liberation Sans">$0M</text><line x1="300.5" y1="854.4" x2="864.5" y2="854.4" stroke="#6e6e6e" stroke-width="1.3"/><line x1="511.4" y1="854.4" x2="511.4" y2="868.4" stroke="#6e6e6e" stroke-width="1.3"/><text x="511.4" y="882.1999999999999" text-anchor="middle" font-size="17" fill="#262626" font-family="Liberation Sans">2020</text><line x1="728.2" y1="854.4" x2="728.2" y2="868.4" stroke="#6e6e6e" stroke-width="1.3"/><text x="728.2" y="882.1999999999999" text-anchor="middle" font-size="17" fill="#262626" font-family="Liberation Sans">2022</text><text x="0" y="0" transform="translate(216.5,782) rotate(-90)" text-anchor="middle" font-size="17" fill="#1e1e1e" font-family="Liberation Sans">BTC</text></svg>
<svg class="a" style="left:0px;top:0px;pointer-events:none" width="1920" height="1080" viewBox="0 0 1920 1080"><polyline points="1046.5,852.9 1096.7,852.9 1121.7,852.5 1123.3,851.2 1144.2,850.8 1146.7,849.6 1183.3,849.6 1185.8,848.3 1235.0,849.5 1320.0,849.7 1357.0,848.4 1362.0,849.7 1467.0,849.7 1472.0,847.0 1590.0,847.0 1595.0,845.4 1612.0,845.4 1614.0,844.0 1676.0,844.0" fill="none" stroke="#108010" stroke-width="2" stroke-linejoin="round"/><polyline points="1046.5,846.7 1048.3,850.8 1050.0,851.2 1051.7,851.6 1053.3,852.1 1055.0,852.5 1056.7,852.9 1058.2,852.9 1059.7,852.9 1061.2,852.9 1062.7,852.9 1064.2,852.9 1065.8,852.9 1067.3,852.9 1068.8,852.9 1070.3,852.9 1071.8,852.9 1073.3,852.9 1075.0,852.7 1076.6,852.6 1078.3,852.4 1080.0,852.2 1081.7,852.0 1083.3,851.9 1085.0,851.7 1086.7,851.6 1088.3,851.6 1090.0,851.5 1091.7,851.5 1093.3,851.4 1095.0,851.4 1096.6,851.3 1098.3,851.2 1100.0,850.2 1101.7,849.2 1103.3,846.9 1105.0,844.6 1106.7,845.0 1108.3,845.4 1110.0,845.8 1111.6,846.3 1113.3,846.7 1115.0,846.6 1116.7,846.5 1118.3,846.4 1120.0,846.3 1121.7,846.2 1123.3,845.0 1124.9,845.0 1126.5,845.0 1128.1,845.0 1129.7,845.0 1131.3,845.0 1132.9,845.0 1134.6,845.0 1136.2,845.0 1137.8,845.0 1139.4,845.0 1141.0,845.0 1142.6,845.0 1144.2,845.0 1145.8,831.7 1147.5,827.8 1149.6,827.7 1151.7,827.2 1153.3,827.9 1155.0,828.5 1156.7,829.0 1158.3,830.1 1160.0,830.2 1161.7,831.7 1163.3,832.9 1165.8,834.4 1167.8,834.8 1169.7,834.3 1171.7,834.7 1173.4,834.7 1175.0,835.2 1176.7,835.4 1178.4,835.8 1180.0,836.7 1181.7,836.9 1183.3,835.5 1185.0,834.9 1186.7,834.2 1188.3,834.2 1190.0,834.3 1191.6,834.0 1193.3,833.5 1195.0,834.1 1196.7,833.5 1198.3,833.6 1200.0,833.9 1201.5,833.7 1203.0,833.7 1204.5,833.5 1206.0,833.6 1207.5,833.9 1209.0,833.7 1210.5,834.0 1212.0,833.8 1213.5,833.9 1215.0,834.3 1216.5,834.0 1218.0,834.1 1219.5,834.3 1221.0,833.8 1222.5,833.8 1224.0,834.4 1225.5,834.4 1227.0,834.0 1228.5,834.0 1230.0,834.4 1231.5,834.5 1233.0,833.9 1234.5,834.4 1236.0,834.3 1237.5,834.1 1239.0,833.9 1240.5,833.6 1242.0,833.5 1243.5,834.1 1245.0,833.6 1246.5,833.9 1248.0,833.5 1249.5,833.9 1251.0,833.7 1252.5,833.4 1254.0,833.3 1255.5,833.6 1257.0,833.1 1258.5,833.2 1260.0,833.4 1261.5,833.6 1263.0,833.4 1264.5,833.1 1266.0,833.5 1267.5,833.0 1269.0,832.8 1270.5,832.9 1272.0,833.0 1273.5,832.7 1275.0,832.7 1276.5,832.8 1278.0,832.9 1279.5,832.6 1281.0,832.7 1282.5,833.0 1284.0,833.0 1285.5,832.8 1287.0,832.8 1288.5,832.6 1290.0,832.3 1291.5,832.2 1293.0,832.1 1294.5,832.7 1296.0,832.5 1297.5,832.6 1299.0,831.9 1300.5,832.3 1302.0,832.2 1303.5,832.3 1305.0,832.0 1306.5,832.4 1308.0,831.7 1309.5,832.0 1311.0,832.1 1312.5,832.2 1314.0,832.0 1315.5,832.0 1317.0,832.0 1318.5,832.0 1320.0,831.6 1321.5,831.8 1323.0,832.0 1324.6,832.0 1326.1,831.6 1327.6,831.9 1329.1,832.0 1330.7,831.8 1332.2,831.8 1333.7,831.6 1335.2,831.8 1336.8,831.8 1338.3,831.4 1339.8,831.8 1341.3,832.0 1342.9,832.0 1344.4,831.9 1345.9,831.6 1347.4,831.9 1349.0,831.8 1350.5,831.7 1352.0,831.9 1353.5,830.9 1355.0,830.9 1356.7,830.4 1358.3,830.8 1360.0,830.7 1362.0,832.7 1363.5,833.0 1365.0,832.9 1366.5,833.0 1368.1,833.2 1369.6,832.8 1371.1,832.6 1372.6,832.8 1374.1,833.1 1375.7,832.7 1377.2,832.7 1378.7,833.2 1380.2,833.1 1381.7,832.9 1383.2,833.2 1384.8,832.9 1386.3,833.1 1387.8,832.8 1389.3,832.9 1390.8,833.2 1392.3,833.3 1393.8,833.3 1395.4,832.9 1396.9,833.1 1398.4,832.9 1399.9,832.8 1401.4,833.0 1403.0,833.3 1404.5,833.3 1406.0,833.2 1407.5,833.4 1409.0,832.9 1410.5,832.8 1412.0,833.0 1413.6,832.9 1415.1,832.9 1416.6,833.0 1418.1,833.2 1419.6,833.1 1421.2,833.0 1422.7,833.3 1424.2,833.4 1425.7,833.1 1427.2,832.8 1428.7,832.8 1430.2,833.4 1431.8,832.8 1433.3,833.3 1434.8,833.2 1436.3,833.0 1437.8,833.4 1439.3,832.8 1440.9,832.9 1442.4,833.1 1443.9,832.8 1445.4,833.4 1446.9,833.0 1448.5,832.9 1450.0,832.9 1451.5,833.3 1453.0,833.2 1454.5,833.0 1456.1,832.7 1457.6,832.5 1459.2,832.2 1460.7,831.7 1462.3,831.1 1463.8,831.0 1465.4,830.4 1466.9,830.0 1468.5,830.0 1470.0,829.8 1471.5,829.2 1473.1,829.1 1474.6,828.9 1476.2,828.9 1477.7,828.5 1479.2,828.3 1480.8,828.2 1482.3,827.7 1483.8,827.8 1485.4,827.6 1486.9,826.8 1488.5,827.1 1490.0,826.8 1492.0,824.7 1493.5,825.0 1495.0,825.2 1496.5,825.4 1498.0,825.1 1499.5,825.3 1501.0,825.6 1502.5,825.6 1504.0,825.7 1505.5,825.4 1507.0,825.6 1508.5,825.3 1510.0,825.8 1511.5,825.8 1513.0,825.6 1514.6,825.7 1516.1,825.3 1517.6,825.7 1519.1,825.8 1520.7,825.8 1522.2,825.4 1523.7,825.6 1525.2,825.2 1526.7,825.6 1528.3,825.5 1529.8,825.2 1531.3,824.9 1532.8,825.2 1534.3,825.2 1535.9,825.3 1537.4,825.1 1538.9,824.8 1540.4,825.3 1542.0,824.7 1543.5,825.2 1545.0,824.8 1546.5,824.5 1548.0,824.5 1549.5,823.7 1551.0,823.4 1552.5,823.3 1554.0,823.1 1555.5,822.8 1557.0,822.3 1558.5,822.2 1560.0,821.5 1561.6,821.6 1563.1,820.8 1564.7,820.7 1566.2,820.8 1567.8,820.4 1569.4,820.5 1570.9,820.3 1572.5,820.0 1574.1,820.1 1575.6,819.7 1577.2,819.3 1578.8,819.2 1580.3,819.3 1581.9,819.2 1583.4,818.5 1585.0,818.7 1586.5,818.5 1588.0,817.9 1589.5,817.6 1591.0,817.1 1592.5,817.0 1594.0,816.6 1595.5,816.4 1597.0,815.7 1598.5,816.0 1600.0,815.4 1601.5,815.0 1603.0,814.9 1604.5,814.4 1606.0,814.0 1607.5,813.8 1609.0,813.1 1610.5,813.0 1612.0,812.6 1613.5,812.7 1615.0,812.3 1616.5,811.7 1618.1,811.7 1619.6,811.3 1621.2,811.4 1622.7,811.6 1624.2,811.5 1625.8,811.1 1627.3,810.8 1628.8,810.6 1630.4,810.8 1631.9,810.9 1633.5,810.2 1635.0,810.5 1636.6,810.0 1638.2,810.1 1639.9,810.1 1641.5,810.4 1643.1,810.2 1644.8,810.2 1646.4,810.4 1648.0,810.0 1649.0,806.1 1650.5,805.5 1652.0,805.7 1653.5,805.4 1655.0,805.3 1656.5,805.4 1658.0,805.3 1659.5,805.2 1661.0,805.1 1662.5,805.1 1664.0,804.7 1665.5,804.7 1667.0,804.9 1668.5,804.8 1670.0,804.6 1671.5,804.7 1673.0,804.5 1674.5,804.5 1676.0,804.2" fill="none" stroke="#800080" stroke-width="2" stroke-linejoin="round"/><polyline points="1046.5,846.2 1048.3,846.7 1050.8,849.2 1060.0,849.6 1061.7,851.2 1065.0,849.6 1070.8,851.2 1072.5,849.6 1092.5,849.6 1095.0,847.1 1101.7,846.7 1103.3,842.5 1106.7,840.0 1109.2,841.7 1113.3,842.1 1115.0,843.3 1119.2,842.1 1120.0,839.6 1122.5,839.6 1122.9,832.1 1126.7,832.5 1128.3,831.7 1131.7,834.6 1134.2,831.7 1138.3,832.1 1140.0,836.2 1144.2,836.2 1145.4,788.9 1147.0,730.5 1160.0,730.5 1162.0,740.0 1163.0,744.4 1165.0,788.3 1200.0,788.3 1200.0,781.0 1230.0,781.0 1230.0,788.3 1313.0,788.3 1313.0,781.0 1409.0,781.0 1410.0,776.5 1411.0,790.0 1413.0,783.0 1415.0,789.0 1418.0,784.0 1420.0,782.0 1430.0,781.0 1431.0,788.4 1458.0,788.4 1459.0,781.0 1492.0,781.0 1493.0,777.0 1494.0,789.0 1496.0,780.0 1498.0,787.0 1500.0,788.4 1512.0,790.0 1515.0,796.0 1530.0,796.0 1535.0,792.0 1545.0,788.0 1550.0,780.8 1560.0,780.8 1561.0,795.0 1562.0,780.8 1676.0,780.8" fill="none" stroke="#0000f0" stroke-width="2" stroke-linejoin="round"/><line x1="1562" y1="852.8" x2="1676" y2="852.8" stroke="#f5a623" stroke-width="2.6"/><line x1="1170.8" y1="852.5" x2="1181.7" y2="852.5" stroke="#f5a623" stroke-width="3"/><line x1="1195" y1="853" x2="1275" y2="853" stroke="#f5a623" stroke-width="2.2"/><line x1="1046.4" y1="709.2" x2="1046.4" y2="854.2" stroke="#6e6e6e" stroke-width="1.3"/><line x1="1030.4" y1="709.2" x2="1046.4" y2="709.2" stroke="#6e6e6e" stroke-width="1.3"/><text x="1029.9" y="713.7" text-anchor="end" font-size="17" fill="#262626" font-family="Liberation Sans">20M</text><line x1="1030.4" y1="745.3" x2="1046.4" y2="745.3" stroke="#6e6e6e" stroke-width="1.3"/><text x="1029.9" y="749.8" text-anchor="end" font-size="17" fill="#262626" font-family="Liberation Sans">15M</text><line x1="1030.4" y1="781.4" x2="1046.4" y2="781.4" stroke="#6e6e6e" stroke-width="1.3"/><text x="1029.9" y="785.9" text-anchor="end" font-size="17" fill="#262626" font-family="Liberation Sans">10M</text><line x1="1030.4" y1="818.6" x2="1046.4" y2="818.6" stroke="#6e6e6e" stroke-width="1.3"/><text x="1029.9" y="823.1" text-anchor="end" font-size="17" fill="#262626" font-family="Liberation Sans">5M</text><line x1="1030.4" y1="854.2" x2="1046.4" y2="854.2" stroke="#6e6e6e" stroke-width="1.3"/><text x="1029.9" y="858.7" text-anchor="end" font-size="17" fill="#262626" font-family="Liberation Sans">0M</text><line x1="1046.4" y1="854.2" x2="1676" y2="854.2" stroke="#6e6e6e" stroke-width="1.3"/><line x1="1161.7" y1="854.2" x2="1161.7" y2="868.2" stroke="#6e6e6e" stroke-width="1.3"/><text x="1161.7" y="882.0" text-anchor="middle" font-size="17" fill="#262626" font-family="Liberation Sans">2019</text><line x1="1282.5" y1="854.2" x2="1282.5" y2="868.2" stroke="#6e6e6e" stroke-width="1.3"/><text x="1282.5" y="882.0" text-anchor="middle" font-size="17" fill="#262626" font-family="Liberation Sans">2020</text><line x1="1403.5" y1="854.2" x2="1403.5" y2="868.2" stroke="#6e6e6e" stroke-width="1.3"/><text x="1403.5" y="882.0" text-anchor="middle" font-size="17" fill="#262626" font-family="Liberation Sans">2021</text><line x1="1524.3" y1="854.2" x2="1524.3" y2="868.2" stroke="#6e6e6e" stroke-width="1.3"/><text x="1524.3" y="882.0" text-anchor="middle" font-size="17" fill="#262626" font-family="Liberation Sans">2022</text><line x1="1645.5" y1="854.2" x2="1645.5" y2="868.2" stroke="#6e6e6e" stroke-width="1.3"/><text x="1645.5" y="882.0" text-anchor="middle" font-size="17" fill="#262626" font-family="Liberation Sans">2023</text><text x="0" y="0" transform="translate(976.5,780.5) rotate(-90)" text-anchor="middle" font-size="17" fill="#1e1e1e" font-family="Liberation Sans">Satoshis</text></svg>
<div class="a" style="left:206px;top:1006px;width:6px;height:3px;border-radius:3px 3px 0 0;background:#222"></div>
<div class="a" style="left:216px;top:1006px;width:6px;height:3px;border-radius:3px 3px 0 0;background:#222"></div>
<div class="a" style="left:981px;top:1006px;width:7px;height:3px;border-radius:3px 3px 0 0;background:#222"></div>
<div class="a" style="left:989px;top:1006px;width:6px;height:3px;border-radius:3px 3px 0 0;background:#222"></div>
<div class="a" style="left:0;top:1008px;width:1920px;height:72px;background:#1f1f1f;border-top:1px solid #3a3a3a"></div>
<svg class="a" style="left:26px;top:1022px;" width="42" height="40" viewBox="0 0 42 40"><defs><linearGradient id="sun" x1="0" y1="0" x2="1" y2="1"><stop offset="0" stop-color="#ffc531"/><stop offset="1" stop-color="#f07d10"/></linearGradient><linearGradient id="cld" x1="0" y1="0" x2="0" y2="1"><stop offset="0" stop-color="#e4ecfb"/><stop offset="1" stop-color="#9fb7e6"/></linearGradient></defs><circle cx="30" cy="14" r="9" fill="url(#sun)"/><path d="M8.5,38 Q2.5,38 2.5,31 Q2.5,24.5 9,24 Q10.5,14.5 19,14.5 Q26.5,14.5 28.5,21.5 Q36,21.5 38,28 Q40.5,29.5 40.5,33 Q40.5,38 35,38 Z" fill="url(#cld)"/></svg>
<div class="t" style="left:76px;top:1023.69px;font-size:17.5px;color:#ffffff;font-weight:400;font-style:normal;letter-spacing:-0.3px">30°C</div>
<div class="t" style="left:75.5px;top:1047.26px;font-size:18px;color:#d6d6d6;font-weight:400;font-style:normal;letter-spacing:0.1px">Ciel couvert</div>
<svg class="a" style="left:268px;top:1027px;" width="35" height="35" viewBox="0 0 35 35"><defs><linearGradient id="win" gradientUnits="userSpaceOnUse" x1="0" y1="0" x2="35" y2="35"><stop offset="0" stop-color="#86dcf8"/><stop offset="0.5" stop-color="#3fb8f3"/><stop offset="1" stop-color="#1596ef"/></linearGradient></defs><rect x="0" y="0" width="16.6" height="16.6" rx="1.2" fill="url(#win)"/><rect x="18.4" y="0" width="16.6" height="16.6" rx="1.2" fill="url(#win)"/><rect x="0" y="18.4" width="16.6" height="16.6" rx="1.2" fill="url(#win)"/><rect x="18.4" y="18.4" width="16.6" height="16.6" rx="1.2" fill="url(#win)"/></svg>
<div class="a" style="left:325px;top:1020px;width:326px;height:47px;border-radius:23.5px;background:#363636;border:1px solid #3e3e3e"></div>
<svg class="a" style="left:340px;top:1032px;" width="24" height="24" viewBox="0 0 24 24"><circle cx="9.5" cy="9.5" r="7.5" stroke="#e6e6e6" stroke-width="2.4" fill="#5a5a5a"/><path d="M15,15 L21.5,21.5" stroke="#e6e6e6" stroke-width="2.6" stroke-linecap="round"/></svg>
<div class="t" style="left:379px;top:1036.41px;font-size:19.6px;color:#e0e0e0;font-weight:400;font-style:normal;letter-spacing:0.25px">Rechercher</div>
<svg class="a" style="left:574px;top:1023px;" width="76" height="41" viewBox="0 0 76 41"><defs><radialGradient id="aur" cx="0.55" cy="0.25" r="0.75"><stop offset="0" stop-color="#f58ad8"/><stop offset="0.35" stop-color="#9a6ee0"/><stop offset="0.7" stop-color="#3c3f9a"/><stop offset="1" stop-color="#1b2a5a"/></radialGradient><linearGradient id="snow" x1="0" y1="0" x2="1" y2="0"><stop offset="0" stop-color="#3b5bd0"/><stop offset="0.6" stop-color="#c8a8f5"/><stop offset="1" stop-color="#8a7ae0"/></linearGradient><clipPath id="ac"><path d="M10,41 Q2,30 8,20 Q18,5 40,3 L53,3 Q73,3 73,20.5 Q73,38 53,38 L50,41 Z"/></clipPath></defs><g clip-path="url(#ac)"><rect x="0" y="0" width="76" height="41" fill="url(#aur)"/><path d="M6,8 Q18,18 30,16 M48,16 Q60,15 72,5" stroke="#7fe6c0" stroke-width="3.5" fill="none" opacity="0.85"/><path d="M0,41 L3,26 L6,32 L9,22 L13,30 L16,24 L19,34 L24,41 Z" fill="#12506e"/><path d="M50,41 L54,26 L58,30 L61,18 L65,26 L68,20 L72,28 L76,24 L76,41 Z" fill="#12506e"/><path d="M30,36 L37,14 L44,36 Z" fill="#1e4f70"/><path d="M6,41 Q24,31 44,34 Q58,36 70,30 L76,41 Z" fill="url(#snow)"/></g></svg>
<svg class="a" style="left:670px;top:1026px;" width="38" height="35" viewBox="0 0 38 35"><defs><linearGradient id="tv1" x1="0" y1="0" x2="1" y2="1"><stop offset="0" stop-color="#7a7a7a"/><stop offset="1" stop-color="#4a4a4a"/></linearGradient><linearGradient id="tv2" x1="0" y1="0" x2="1" y2="1"><stop offset="0" stop-color="#ffffff"/><stop offset="1" stop-color="#cfcfcf"/></linearGradient></defs><rect x="1" y="10" width="27" height="24" rx="2" fill="url(#tv1)"/><rect x="10" y="1" width="27" height="24" rx="2" fill="url(#tv2)" opacity="0.95"/><rect x="10" y="10" width="18" height="15" fill="#a8a8a8" opacity="0.85"/></svg>
<svg class="a" style="left:736px;top:1017px;" width="50" height="45" viewBox="0 0 50 45"><defs><linearGradient id="tm" x1="0" y1="0" x2="1" y2="1"><stop offset="0" stop-color="#8a6fd8"/><stop offset="1" stop-color="#5b5fd6"/></linearGradient></defs><path d="M2,43 L5,34 Q1,29 1,25 Q1,10 18,10 Q35,10 35,25 Q35,40 18,40 Q14,40 11,39 Z" fill="url(#tm)"/><rect x="9" y="20" width="14" height="11" rx="2" fill="#fff"/><path d="M23,23.5 L28,20.5 L28,30.5 L23,27.5 Z" fill="#fff"/><circle cx="33" cy="14" r="12" fill="#dda4e4"/><text x="33" y="19.5" text-anchor="middle" font-size="16" fill="#1e1e1e" font-family="Liberation Sans">1</text></svg>
<svg class="a" style="left:802px;top:1023px;" width="44" height="36" viewBox="0 0 44 36"><path d="M1,9 L9,9 L15,25 L20,12 L25,12 L30,25 L34,14 L40,14 L32,35 L27,35 L22.5,22 L18,35 L13,35 Z" fill="#e8312a"/><path d="M20,12 L25,12 L30,25 L27,35 Z" fill="#ff7a2a"/><path d="M30,1 L39,1 L44,6 L44,17 L30,17 Z" fill="#4b8ef0"/><path d="M32.5,6 L34.3,13 L37,8 L39.7,13 L41.5,6" stroke="#fff" stroke-width="1.2" fill="none"/></svg>
<div class="a" style="left:817px;top:1068px;width:10px;height:5px;border-radius:3px;background:#9a9a9a"></div>
<svg class="a" style="left:870px;top:1027px;" width="34" height="34" viewBox="0 0 34 34"><circle cx="17" cy="17" r="16.3" fill="#2aa1e0"/><path d="M7.5,16.5 L25,9.5 L22,25 L16,20.5 L13,23 L13.5,18.5 L21.5,11.5 L11.5,17.8 Z" fill="#fff"/></svg>
<svg class="a" style="left:934px;top:1027px;" width="38" height="35" viewBox="0 0 38 35"><rect x="5" y="8" width="32" height="26" rx="2.5" fill="#5e6064"/><rect x="5" y="31" width="32" height="3" fill="#8a8c90"/><rect x="1" y="1" width="26" height="18" rx="2" fill="#22c0d8"/><g fill="#fff"><rect x="5" y="5" width="2.5" height="2.5"/><rect x="9.5" y="5" width="2.5" height="2.5"/><rect x="14" y="5" width="2.5" height="2.5"/><rect x="18.5" y="5" width="2.5" height="2.5"/><rect x="7" y="9.5" width="2.5" height="2.5"/><rect x="11.5" y="9.5" width="2.5" height="2.5"/><rect x="16" y="9.5" width="2.5" height="2.5"/><rect x="6" y="14" width="15" height="2"/></g></svg>
<svg class="a" style="left:1000px;top:1017px;" width="50" height="46" viewBox="0 0 50 46"><g transform="translate(19.2,27.2)"><path d="M0,-18.3 A18.3,18.3 0 0 1 15.85,9.15 L7.9,4.6 A9.1,9.1 0 0 0 0,-9.1 Z" fill="#fbc02d"/><path d="M15.85,9.15 A18.3,18.3 0 0 1 -15.85,9.15 L-7.9,4.6 A9.1,9.1 0 0 0 7.9,4.6 Z" fill="#34a853"/><path d="M-15.85,9.15 A18.3,18.3 0 0 1 0,-18.3 L0,-9.1 A9.1,9.1 0 0 0 -7.9,4.6 Z" fill="#ea4335"/><path d="M0,-18.3 A18.3,18.3 0 0 1 15.85,-9.15 L0,-9.1 Z" fill="#ea4335"/><circle r="9.2" fill="#fff"/><circle r="7.2" fill="#4285f4"/></g><path d="M27,14 Q25,4 30,2 Q34,6 37,8 Q40,6 44,2 Q49,4 47,14 Q44,22 37,22 Q30,22 27,14 Z" fill="#e056c0"/><ellipse cx="37" cy="15" rx="6" ry="8" fill="#6e4a30"/><rect x="31" y="9" width="12" height="4" fill="#9a2a2a"/></svg>
<div class="a" style="left:1014px;top:1068px;width:10px;height:5px;border-radius:3px;background:#9a9a9a"></div>
<svg class="a" style="left:1070px;top:1025px;" width="30" height="38" viewBox="0 0 30 38"><defs><linearGradient id="np" x1="0" y1="0" x2="0" y2="1"><stop offset="0" stop-color="#63c7ee"/><stop offset="1" stop-color="#3aa4d8"/></linearGradient></defs><rect x="1" y="3" width="28" height="31" rx="2" fill="url(#np)"/><rect x="1" y="31" width="28" height="3" fill="#e8e8e8"/><rect x="1" y="33" width="28" height="3.5" fill="#d9650f"/><g fill="#1a5f86"><circle cx="6" cy="3.5" r="1.6"/><circle cx="12" cy="3.5" r="1.6"/><circle cx="18" cy="3.5" r="1.6"/><circle cx="24" cy="3.5" r="1.6"/><rect x="6" y="11" width="18" height="1.8"/><rect x="6" y="17" width="18" height="1.8"/><rect x="6" y="23" width="18" height="1.8"/></g></svg>
<svg class="a" style="left:1132px;top:1017px;" width="52" height="46" viewBox="0 0 52 46"><path d="M3,45 L6,36 Q2,31 2,26 Q2,11 18.5,11 Q35,11 35,26 Q35,42 18.5,42 Q13,42 9,40 Z" fill="#fff"/><path d="M6,42 L8.5,35.5 Q5,31 5,26 Q5,14 18.5,14 Q32,14 32,26 Q32,39 18.5,39 Q13.5,39 10,37 Z" fill="#3dbb4e"/><path d="M12.5,20 Q14,18 15.5,19 L17.5,22.5 Q17.5,24 16,25 Q17.5,29 21.5,31 Q23,29.5 24,29.5 L27.5,31.5 Q28,33 26,34.5 Q18,35 12.5,26.5 Q11.5,22 12.5,20 Z" fill="#fff"/><ellipse cx="33" cy="14" rx="14.5" ry="12.5" fill="#dda4e4"/><text x="33" y="20" text-anchor="middle" font-size="17" fill="#1e1e1e" font-family="Liberation Sans" letter-spacing="-0.5">73</text></svg>
<div class="a" style="left:1146px;top:1068px;width:10px;height:5px;border-radius:3px;background:#9a9a9a"></div>
<svg class="a" style="left:1199px;top:1027px;" width="37" height="34" viewBox="0 0 37 34"><path d="M1,4 Q1,1 4,1 L13,1 L17,5 L33,5 Q36,5 36,8 L36,31 Q36,33 34,33 L3,33 Q1,33 1,31 Z" fill="#f0b81c"/><path d="M1,9 L36,9 L36,31 Q36,33 34,33 L3,33 Q1,33 1,31 Z" fill="#ffd75a"/><path d="M7,33 L7,25 Q7,22 10,22 L27,22 Q30,22 30,25 L30,33 Z" fill="#1a7fe0"/><rect x="12" y="26" width="13" height="1.8" fill="#0d4a90"/></svg>
<svg class="a" style="left:1266px;top:1027px;" width="32" height="34" viewBox="0 0 32 34"><path d="M1,4 L20,0.5 L20,33.5 L1,30 Z" fill="#1d6f42"/><rect x="18" y="5" width="13" height="24" fill="#fff"/><g fill="#1d6f42"><rect x="20" y="8" width="4" height="2"/><rect x="25" y="8" width="4" height="2"/><rect x="20" y="12" width="4" height="2"/><rect x="25" y="12" width="4" height="2"/><rect x="20" y="16" width="4" height="2"/><rect x="25" y="16" width="4" height="2"/><rect x="20" y="20" width="4" height="2"/><rect x="25" y="20" width="4" height="2"/><rect x="20" y="24" width="4" height="2"/><rect x="25" y="24" width="4" height="2"/></g><path d="M5,10 L8,10 L10.5,14.5 L13,10 L16,10 L12,17 L16,24 L13,24 L10.5,19.5 L8,24 L5,24 L9,17 Z" fill="#fff"/></svg>
<svg class="a" style="left:1333px;top:1025px;" width="33" height="37" viewBox="0 0 33 37"><path d="M5,3 L11,0.5 L16.5,2 L22,0.5 L28,3 L31,7 L30,12 L32,17 L28,29 L16.5,36.5 L5,29 L1,17 L3,12 L2,7 Z" fill="#fb542b"/><path d="M16.5,9 L11,8 L7,11 L9,17 L6,20 L10,26 L16.5,31 L23,26 L27,20 L24,17 L26,11 L22,8 Z" fill="#fff"/><path d="M10,13 L14,15 L13,18 L16.5,20 L20,18 L19,15 L23,13" stroke="#fb542b" stroke-width="1.6" fill="none"/><path d="M13,25 L16.5,23 L20,25 L16.5,28 Z" fill="#fb542b"/></svg>
<svg class="a" style="left:1396px;top:1025px;" width="38" height="38" viewBox="0 0 38 38"><defs><radialGradient id="ut" cx="0.4" cy="0.35" r="0.7"><stop offset="0" stop-color="#8cc85a"/><stop offset="1" stop-color="#5f9e36"/></radialGradient></defs><circle cx="19" cy="19" r="18" fill="url(#ut)"/><path d="M7,12 L13,12 L15.5,24 Q18,27 22,24 L20,12 L26,12 L29,26 Q30,28 32,27 L31,31 Q26,32 24,28 Q18,33 13,28 L14,36 L10,36 Z" fill="#fff"/></svg>
<div class="a" style="left:1410px;top:1068px;width:10px;height:5px;border-radius:3px;background:#9a9a9a"></div>
<div class="a" style="left:1451px;top:1014px;width:60px;height:60px;border-radius:6px;background:#2b2b2b;border:1px solid #333"></div>
<svg class="a" style="left:1461px;top:1025px;" width="42" height="40" viewBox="0 0 42 40"><rect x="1" y="1" width="28" height="28" rx="3" fill="#f2f2f2"/><g fill="#d83b01"><rect x="4" y="4" width="4" height="4"/><rect x="10" y="4" width="4" height="4"/><rect x="16" y="4" width="4" height="4"/><rect x="4" y="10" width="4" height="4"/><rect x="4" y="16" width="4" height="4"/></g><path d="M13,13 L29,13 L29,29 L13,29" fill="#d9d9d9"/><path d="M21,9 L28,25 M30,26 L20,34" stroke="#9a9a9a" stroke-width="2.5"/><circle cx="34" cy="22" r="3.8" stroke="#2a9be6" stroke-width="2.4" fill="none"/><circle cx="18" cy="35" r="3.8" stroke="#2a9be6" stroke-width="2.4" fill="none"/></svg>
<div class="a" style="left:1469px;top:1068px;width:24px;height:5px;border-radius:3px;background:#dba5e8"></div>
<svg class="a" style="left:1547px;top:1037px;" width="20" height="12" viewBox="0 0 20 12"><path d="M2,10 L10,2.5 L18,10" stroke="#f2f2f2" stroke-width="2" fill="none"/></svg>
<svg class="a" style="left:1591px;top:1030px;" width="26" height="28" viewBox="0 0 26 28"><path d="M23.5,2 L2,11.5 L12,15 L15.5,25.5 Z" stroke="#d7a3ea" stroke-width="1.9" fill="none" stroke-linejoin="round"/></svg>
<svg class="a" style="left:1639px;top:1033px;" width="28" height="21" viewBox="0 0 28 21"><path d="M2,8 Q14,-2.5 26,8 M6,12 Q14,4.5 22,12 M10,16 Q14,12.5 18,16" stroke="#f2f2f2" stroke-width="2.1" fill="none" stroke-linecap="round"/><circle cx="14" cy="18.8" r="1.9" fill="#f2f2f2"/></svg>
<svg class="a" style="left:1675px;top:1032px;" width="28" height="24" viewBox="0 0 28 24"><path d="M2,8.5 L6.5,8.5 L12,3 L12,21 L6.5,15.5 L2,15.5 Z" stroke="#f2f2f2" stroke-width="1.8" fill="none" stroke-linejoin="round"/><path d="M16,8.5 Q18.5,12 16,15.5 M19.5,5.5 Q24,12 19.5,18.5 M23,2.5 Q29,12 23,21.5" stroke="#f2f2f2" stroke-width="1.8" fill="none" stroke-linecap="round"/></svg>
<svg class="a" style="left:1712px;top:1035px;" width="27" height="18" viewBox="0 0 27 18"><rect x="1" y="1.5" width="21" height="14" rx="3" stroke="#f2f2f2" stroke-width="1.8" fill="none"/><rect x="4" y="4.5" width="3.5" height="8" rx="1" fill="#f2f2f2"/><rect x="23" y="6" width="2.6" height="5" rx="1" fill="#f2f2f2"/></svg>
<div class="t" style="left:1700px;top:1023.76px;font-size:18px;color:#fff;text-align:right;width:156px">09:10</div>
<div class="t" style="left:1700px;top:1047.26px;width:156px;font-size:18.3px;color:#fff;text-align:right;letter-spacing:0.15px">09/04/2023</div>
<svg class="a" style="left:1865px;top:1031px;" width="26" height="26" viewBox="0 0 26 26"><circle cx="13" cy="12.6" r="12.2" fill="#d8a0e8"/><text x="13" y="18.6" text-anchor="middle" font-size="17" fill="#1e1e1e" font-family="Liberation Sans">6</text></svg>
</body></html>
